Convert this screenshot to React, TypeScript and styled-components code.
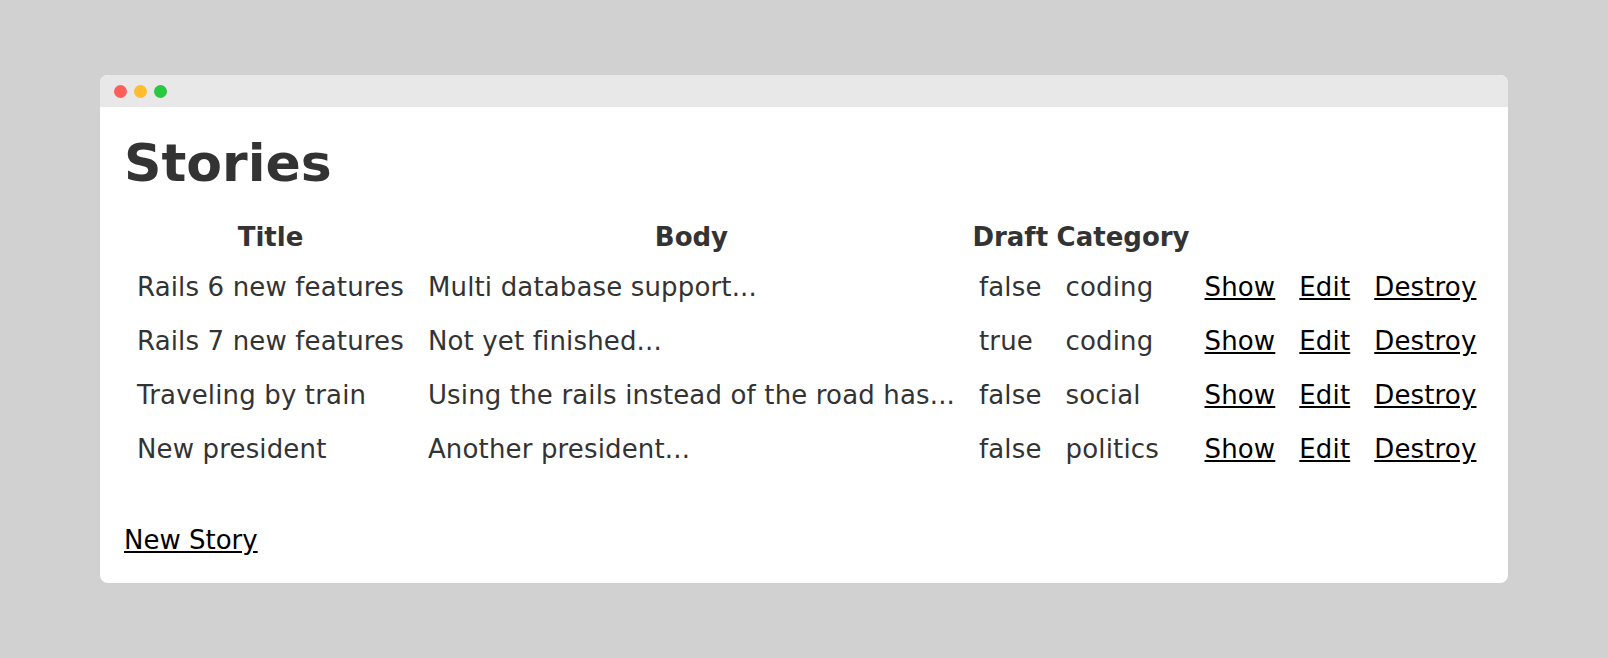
import React from 'react';
import styled, { createGlobalStyle } from 'styled-components';

const GlobalStyle = createGlobalStyle`
  html, body {
    margin: 0;
    padding: 0;
    background: #d1d1d1;
  }
  body {
    font-family: "DejaVu Sans", Verdana, sans-serif;
  }
`;

const Page = styled.div`
  width: 1608px;
  height: 658px;
  padding: 75px 0 0 100px;
  box-sizing: border-box;
`;

const Window = styled.div`
  width: 1408px;
  height: 508px;
  background: #fff;
  border-radius: 8px;
  overflow: hidden;
  display: flex;
  flex-direction: column;
`;

const TitleBar = styled.div`
  flex: 0 0 32px;
  background: #e8e8e8;
  display: flex;
  align-items: center;
  gap: 7px;
  padding-left: 14px;
`;

const Dot = styled.span<{ $color: string }>`
  width: 13px;
  height: 13px;
  border-radius: 50%;
  background: ${(p) => p.$color};
`;

const Content = styled.div`
  padding: 0 24px;
  color: #333;
`;

const Heading = styled.h1`
  font-size: 52px;
  font-weight: bold;
  line-height: 60px;
  margin: 26px 0 20px;
`;

const Table = styled.table`
  border-spacing: 2px;
  font-size: 26px;
`;

const Th = styled.th<{ $pad?: number }>`
  padding: 7px ${(p) => p.$pad ?? 11}px;
  line-height: 30px;
  font-weight: bold;
`;

const Td = styled.td`
  padding: 11px;
  line-height: 30px;
  letter-spacing: 0.15px;
  white-space: nowrap;
`;

const Link = styled.a`
  color: #000;
  text-decoration: underline;
`;

const Footer = styled.p`
  margin: 48px 0 0;
  font-size: 26px;
  line-height: 30px;
`;

const stories = [
  { title: 'Rails 6 new features', body: 'Multi database support...', draft: 'false', category: 'coding' },
  { title: 'Rails 7 new features', body: 'Not yet finished...', draft: 'true', category: 'coding' },
  { title: 'Traveling by train', body: 'Using the rails instead of the road has...', draft: 'false', category: 'social' },
  { title: 'New president', body: 'Another president...', draft: 'false', category: 'politics' },
];

export default function App() {
  return (
    <Page>
      <GlobalStyle />
      <Window>
        <TitleBar>
          <Dot $color="#ff5f57" />
          <Dot $color="#febc2e" />
          <Dot $color="#28c840" />
        </TitleBar>
        <Content>
          <Heading>Stories</Heading>
          <Table>
            <thead>
              <tr>
                <Th>Title</Th>
                <Th>Body</Th>
                <Th $pad={3}>Draft</Th>
                <Th $pad={2}>Category</Th>
                <Th colSpan={3}></Th>
              </tr>
            </thead>
            <tbody>
              {stories.map((s) => (
                <tr key={s.title}>
                  <Td>{s.title}</Td>
                  <Td>{s.body}</Td>
                  <Td>{s.draft}</Td>
                  <Td>{s.category}</Td>
                  <Td><Link href="#">Show</Link></Td>
                  <Td><Link href="#">Edit</Link></Td>
                  <Td><Link href="#">Destroy</Link></Td>
                </tr>
              ))}
            </tbody>
          </Table>
          <Footer>
            <Link href="#">New Story</Link>
          </Footer>
        </Content>
      </Window>
    </Page>
  );
}
